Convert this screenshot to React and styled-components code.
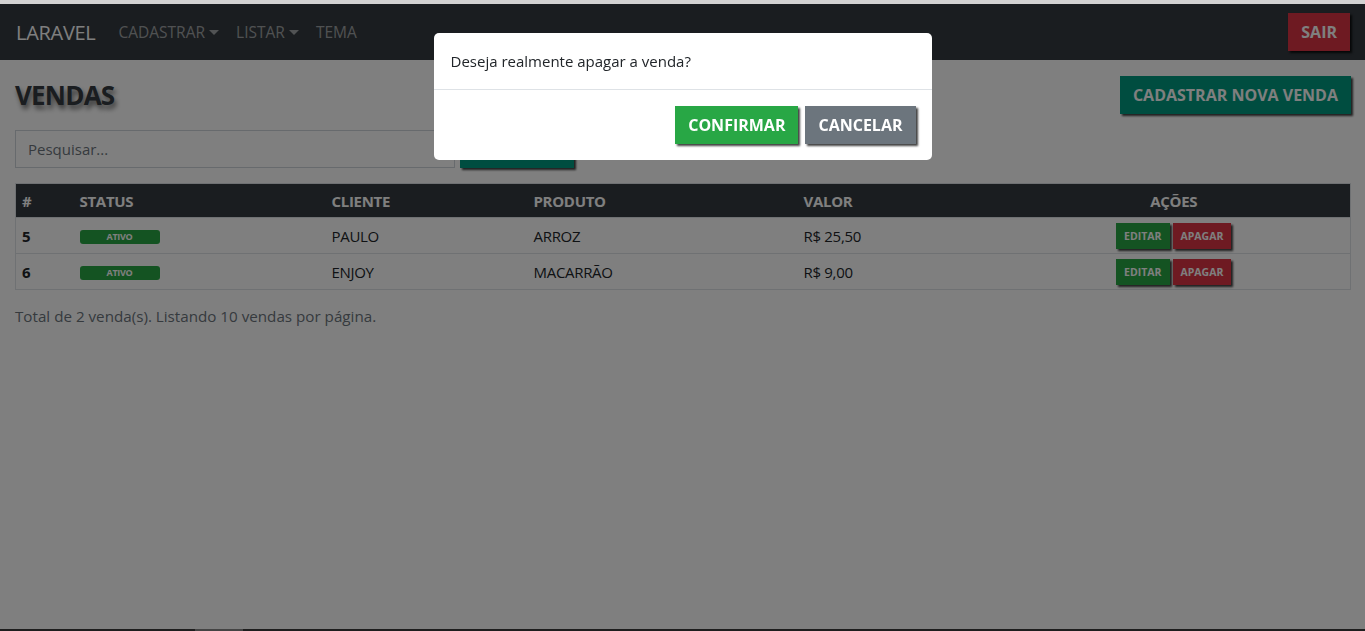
import React from "react";
import styled, { createGlobalStyle } from "styled-components";

const GlobalStyle = createGlobalStyle`
  html, body {
    margin: 0;
    padding: 0;
    background: #fff;
    font-family: "Open Sans", "Noto Sans", sans-serif;
    color: #212529;
  }
  * { box-sizing: border-box; }
`;

const rows = [
  { id: 5, status: "ATIVO", cliente: "PAULO", produto: "ARROZ", valor: "R$ 25,50" },
  { id: 6, status: "ATIVO", cliente: "ENJOY", produto: "MACARRÃO", valor: "R$ 9,00" },
];

const App = () => {
  return (
    <>
      <GlobalStyle />
      <StPage>
        <StNavbar>
          <StBrand>LARAVEL</StBrand>
          <StNavLink>
            CADASTRAR <StCaret />
          </StNavLink>
          <StNavLink>
            LISTAR <StCaret />
          </StNavLink>
          <StNavLink>TEMA</StNavLink>
          <StSpacer />
          <StButton $bg="#dc3545" $size="md">SAIR</StButton>
        </StNavbar>

        <StMain>
          <StTitleRow>
            <StTitle>VENDAS</StTitle>
            <StButton $bg="#009a80" $size="md">CADASTRAR NOVA VENDA</StButton>
          </StTitleRow>

          <StSearchRow>
            <StSearchInput placeholder="Pesquisar..." />
            <StButton $bg="#009a80" $size="md">PESQUISAR</StButton>
          </StSearchRow>

          <StTable>
            <colgroup>
              <col style={{ width: 58 }} />
              <col style={{ width: 252 }} />
              <col style={{ width: 202 }} />
              <col style={{ width: 270 }} />
              <col style={{ width: 200 }} />
              <col />
            </colgroup>
            <thead>
              <tr>
                <StTh>#</StTh>
                <StTh>STATUS</StTh>
                <StTh>CLIENTE</StTh>
                <StTh>PRODUTO</StTh>
                <StTh>VALOR</StTh>
                <StTh $center>AÇÕES</StTh>
              </tr>
            </thead>
            <tbody>
              {rows.map((r) => (
                <tr key={r.id}>
                  <StTd $bold>{r.id}</StTd>
                  <StTd>
                    <StBadge>{r.status}</StBadge>
                  </StTd>
                  <StTd>{r.cliente}</StTd>
                  <StTd>{r.produto}</StTd>
                  <StTd>{r.valor}</StTd>
                  <StTd $center>
                    <StActions>
                      <StButton $bg="#28a745" $size="sm">EDITAR</StButton>
                      <StButton $bg="#dc3545" $size="sm">APAGAR</StButton>
                    </StActions>
                  </StTd>
                </tr>
              ))}
            </tbody>
          </StTable>

          <StTotal>Total de 2 venda(s). Listando 10 vendas por página.</StTotal>
        </StMain>
      </StPage>

      <StOverlay>
        <StModal>
          <StModalBody>Deseja realmente apagar a venda?</StModalBody>
          <StModalFooter>
            <StButton $bg="#28a745" $size="md">CONFIRMAR</StButton>
            <StButton $bg="#6c757d" $size="md">CANCELAR</StButton>
          </StModalFooter>
        </StModal>
      </StOverlay>

      <StTopStrip />
      <StScrollbar>
        <StThumb />
      </StScrollbar>
    </>
  );
};

export default App;

const StPage = styled.div`
  padding-top: 4px;
  min-height: 100vh;
`;

const StNavbar = styled.nav`
  display: flex;
  align-items: center;
  height: 56px;
  padding: 0 15px 0 16px;
  background: #343a40;
`;

const StBrand = styled.span`
  font-size: 20px;
  color: #fff;
  margin-right: 23px;
  letter-spacing: -0.3px;
`;

const StNavLink = styled.span`
  display: inline-flex;
  align-items: center;
  font-size: 15.5px;
  color: rgba(255, 255, 255, 0.55);
  margin-right: 17px;
`;

const StCaret = styled.span`
  display: inline-block;
  margin-left: 4px;
  width: 0;
  height: 0;
  border-left: 5px solid transparent;
  border-right: 5px solid transparent;
  border-top: 5px solid currentColor;
`;

const StSpacer = styled.div`
  flex: 1;
`;

const StButton = styled.button`
  border: none;
  border-radius: 0;
  background: ${(p) => p.$bg};
  color: #fff;
  font-family: inherit;
  font-weight: 700;
  cursor: pointer;
  box-shadow: 2px 2px 2px rgba(0, 0, 0, 0.75);
  white-space: nowrap;
  ${(p) =>
    p.$size === "sm"
      ? `
    height: 26px;
    padding: 0 8px;
    font-size: 10.5px;
  `
      : `
    height: 38px;
    padding: 0 13px;
    font-size: 16px;
  `}
`;

const StMain = styled.main`
  padding: 16px 14px 0 15px;
`;

const StTitleRow = styled.div`
  display: flex;
  justify-content: space-between;
  align-items: center;
`;

const StTitle = styled.h1`
  margin: 0;
  font-size: 26px;
  font-weight: 700;
  color: #343a40;
  letter-spacing: -0.8px;
  text-shadow: 2px 4px 5px rgba(0, 0, 0, 0.55);
`;

const StSearchRow = styled.div`
  display: flex;
  align-items: center;
  gap: 5px;
  margin-top: 16px;
`;

const StSearchInput = styled.input`
  width: 440px;
  height: 38px;
  padding: 0 12px;
  border: 1px solid #ced4da;
  border-radius: 0;
  font-family: inherit;
  font-size: 15px;
  color: #495057;
  &::placeholder {
    color: #6c757d;
  }
`;

const StTable = styled.table`
  width: 100%;
  margin-top: 15px;
  border-collapse: collapse;
  table-layout: fixed;
  border: 1px solid #dee2e6;
`;

const StTh = styled.th`
  background: #343a40;
  color: #fff;
  font-size: 15px;
  font-weight: 700;
  letter-spacing: -0.3px;
  height: 34px;
  padding: 0 6px;
  text-align: ${(p) => (p.$center ? "center" : "left")};
`;

const StTd = styled.td`
  height: 36px;
  padding: 0 6px;
  border-top: 1px solid #dee2e6;
  font-size: 15px;
  letter-spacing: -0.3px;
  font-weight: ${(p) => (p.$bold ? 700 : 400)};
  text-align: ${(p) => (p.$center ? "center" : "left")};
  vertical-align: middle;
`;

const StBadge = styled.span`
  display: inline-block;
  width: 80px;
  height: 14px;
  line-height: 14px;
  border-radius: 3px;
  background: #28a745;
  color: #fff;
  font-size: 9px;
  font-weight: 700;
  text-align: center;
  vertical-align: middle;
`;

const StActions = styled.div`
  display: inline-flex;
  gap: 3px;
`;

const StTotal = styled.p`
  margin: 16px 0 0;
  font-size: 15.2px;
  color: #6c757d;
`;

const StOverlay = styled.div`
  position: fixed;
  inset: 0;
  background: rgba(0, 0, 0, 0.5);
  display: flex;
  justify-content: center;
  align-items: flex-start;
  padding-top: 33px;
`;

const StModal = styled.div`
  width: 498px;
  background: #fff;
  border-radius: 5px;
  overflow: hidden;
`;

const StModalBody = styled.div`
  height: 57px;
  display: flex;
  align-items: center;
  padding: 0 17px;
  font-size: 15px;
  color: #212529;
  border-bottom: 1px solid #dee2e6;
`;

const StModalFooter = styled.div`
  display: flex;
  justify-content: flex-end;
  gap: 7px;
  padding: 16px 16px 16px;
`;

const StTopStrip = styled.div`
  position: fixed;
  top: 0;
  left: 0;
  right: 0;
  height: 4px;
  background: #d2d2d2;
`;

const StScrollbar = styled.div`
  position: fixed;
  left: 0;
  right: 0;
  bottom: 0;
  height: 2px;
  background: #1e1e1e;
`;

const StThumb = styled.div`
  margin-left: 195px;
  width: 48px;
  height: 2px;
  background: #444;
`;
